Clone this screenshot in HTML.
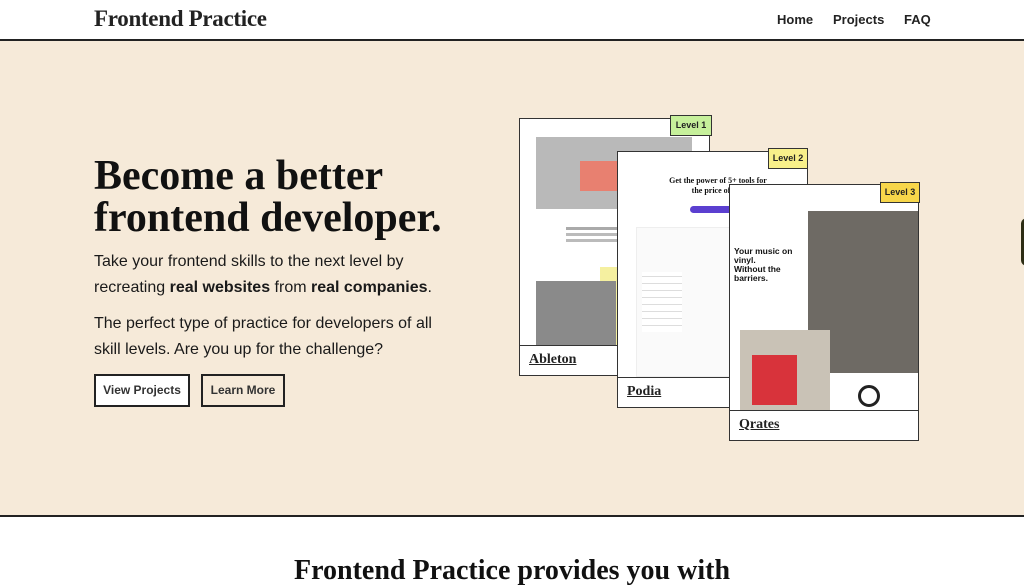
<!DOCTYPE html>
<html><head><meta charset="utf-8"><style>
*{margin:0;padding:0;box-sizing:border-box}
body{width:1024px;height:563px;overflow:hidden;background:#fff;font-family:"Liberation Sans",sans-serif;color:#111;position:relative}
.hdr{height:41px;border-bottom:2px solid #222;position:relative;background:#fff}
.logo{position:absolute;left:94px;top:6px;font-family:"Liberation Serif",serif;font-weight:bold;font-size:23px;letter-spacing:-0.3px;color:#222}
.nav{position:absolute;top:12px;font-size:13px;font-weight:bold;color:#222}
.hero{position:absolute;top:41px;left:0;width:1024px;height:476px;background:#f6ead9;border-bottom:2px solid #222}
h1{position:absolute;left:94px;top:155px;font-family:"Liberation Serif",serif;font-size:42px;line-height:42px;font-weight:bold;color:#111}
.p{position:absolute;left:94px;font-size:16px;line-height:26px;color:#1a1a1a}
.btn{position:absolute;top:333px;height:33px;border:2px solid #222;font-size:12px;font-weight:bold;line-height:29px;text-align:center;color:#333}
.card{position:absolute;background:#fff;border:1.5px solid #333;overflow:hidden}
.lbl{position:absolute;left:0;right:0;bottom:0;height:30px;border-top:1.5px solid #333;background:#fff;font-family:"Liberation Serif",serif;font-weight:bold;font-size:14px;text-decoration:underline;padding:6px 0 0 9px;color:#222}
.tag{position:absolute;height:21px;border:1.5px solid #333;font-size:9px;font-weight:bold;line-height:18px;text-align:center;color:#222}
.g{position:absolute;background:#ccc}
</style></head><body>
<div class="hdr"><div class="logo">Frontend Practice</div>
<div class="nav" style="left:777px">Home</div><div class="nav" style="left:833px">Projects</div><div class="nav" style="left:904px">FAQ</div></div>
<div class="hero"></div>
<h1>Become a better<br>frontend developer.</h1>
<div class="p" style="top:249px">Take your frontend skills to the next level by<br>recreating <b>real websites</b> from <b>real companies</b>.</div>
<div class="p" style="top:311px">The perfect type of practice for developers of all<br>skill levels. Are you up for the challenge?</div>
<div class="btn" style="left:94px;width:96px;top:374px;background:#fff">View Projects</div>
<div class="btn" style="left:201px;width:84px;top:374px">Learn More</div>

<div class="card" style="left:519px;top:118px;width:191px;height:258px">
 <div class="g" style="left:16px;top:18px;width:156px;height:72px;background:#b9b9b9"></div>
 <div class="g" style="left:60px;top:42px;width:40px;height:30px;background:#e88070"></div>
 <div class="g" style="left:46px;top:108px;width:90px;height:3px;background:#aaa"></div>
 <div class="g" style="left:46px;top:114px;width:90px;height:3px;background:#bbb"></div>
 <div class="g" style="left:46px;top:120px;width:90px;height:3px;background:#bbb"></div>
 <div class="g" style="left:80px;top:148px;width:20px;height:80px;background:#f5f0a0"></div>
 <div class="g" style="left:16px;top:162px;width:80px;height:68px;background:#8a8a8a"></div>
 <div class="lbl">Ableton</div>
</div>
<div class="tag" style="left:670px;top:115px;width:42px;background:#c6f09b">Level 1</div>

<div class="card" style="left:617px;top:151px;width:191px;height:257px">
 <div style="position:absolute;left:30px;top:24px;width:140px;font-family:'Liberation Serif',serif;font-weight:bold;font-size:8px;text-align:center;line-height:10px">Get the power of 5+ tools for<br>the price of one</div>
 <div class="g" style="left:72px;top:54px;width:60px;height:7px;border-radius:4px;background:#5b3fd0"></div>
 <div class="g" style="left:18px;top:75px;width:100px;height:150px;background:#fafafa;border:1px solid #eee"></div>
 <div class="g" style="left:24px;top:120px;width:40px;height:60px;background:repeating-linear-gradient(#fff 0 4px,#ddd 4px 5px,#fff 5px 7px)"></div>
 <div class="lbl">Podia</div>
</div>
<div class="tag" style="left:768px;top:148px;width:40px;background:#f8f08a">Level 2</div>

<div class="card" style="left:729px;top:184px;width:190px;height:257px">
 <div style="position:absolute;left:4px;top:62px;font-size:8.5px;font-weight:bold;line-height:9px">Your music on<br>vinyl.<br>Without the<br>barriers.</div>
 <div class="g" style="left:78px;top:26px;width:112px;height:162px;background:#6e6a64"></div>
 <div class="g" style="left:10px;top:145px;width:90px;height:80px;background:#c9c2b6"></div>
 <div class="g" style="left:22px;top:170px;width:45px;height:50px;background:#d8333b"></div>
 <div class="g" style="left:128px;top:200px;width:22px;height:22px;border-radius:50%;background:#fff;border:3px solid #222"></div>
 <div class="lbl">Qrates</div>
</div>
<div class="tag" style="left:880px;top:182px;width:40px;background:#f7d64a">Level 3</div>

<div style="position:absolute;left:1021px;top:218px;width:10px;height:48px;border-radius:6px 0 0 6px;background:#2d2d14"></div>
<div style="position:absolute;left:0;width:1024px;top:555px;text-align:center;font-family:'Liberation Serif',serif;font-weight:bold;font-size:28px;color:#111">Frontend Practice provides you with</div>
</body></html>
